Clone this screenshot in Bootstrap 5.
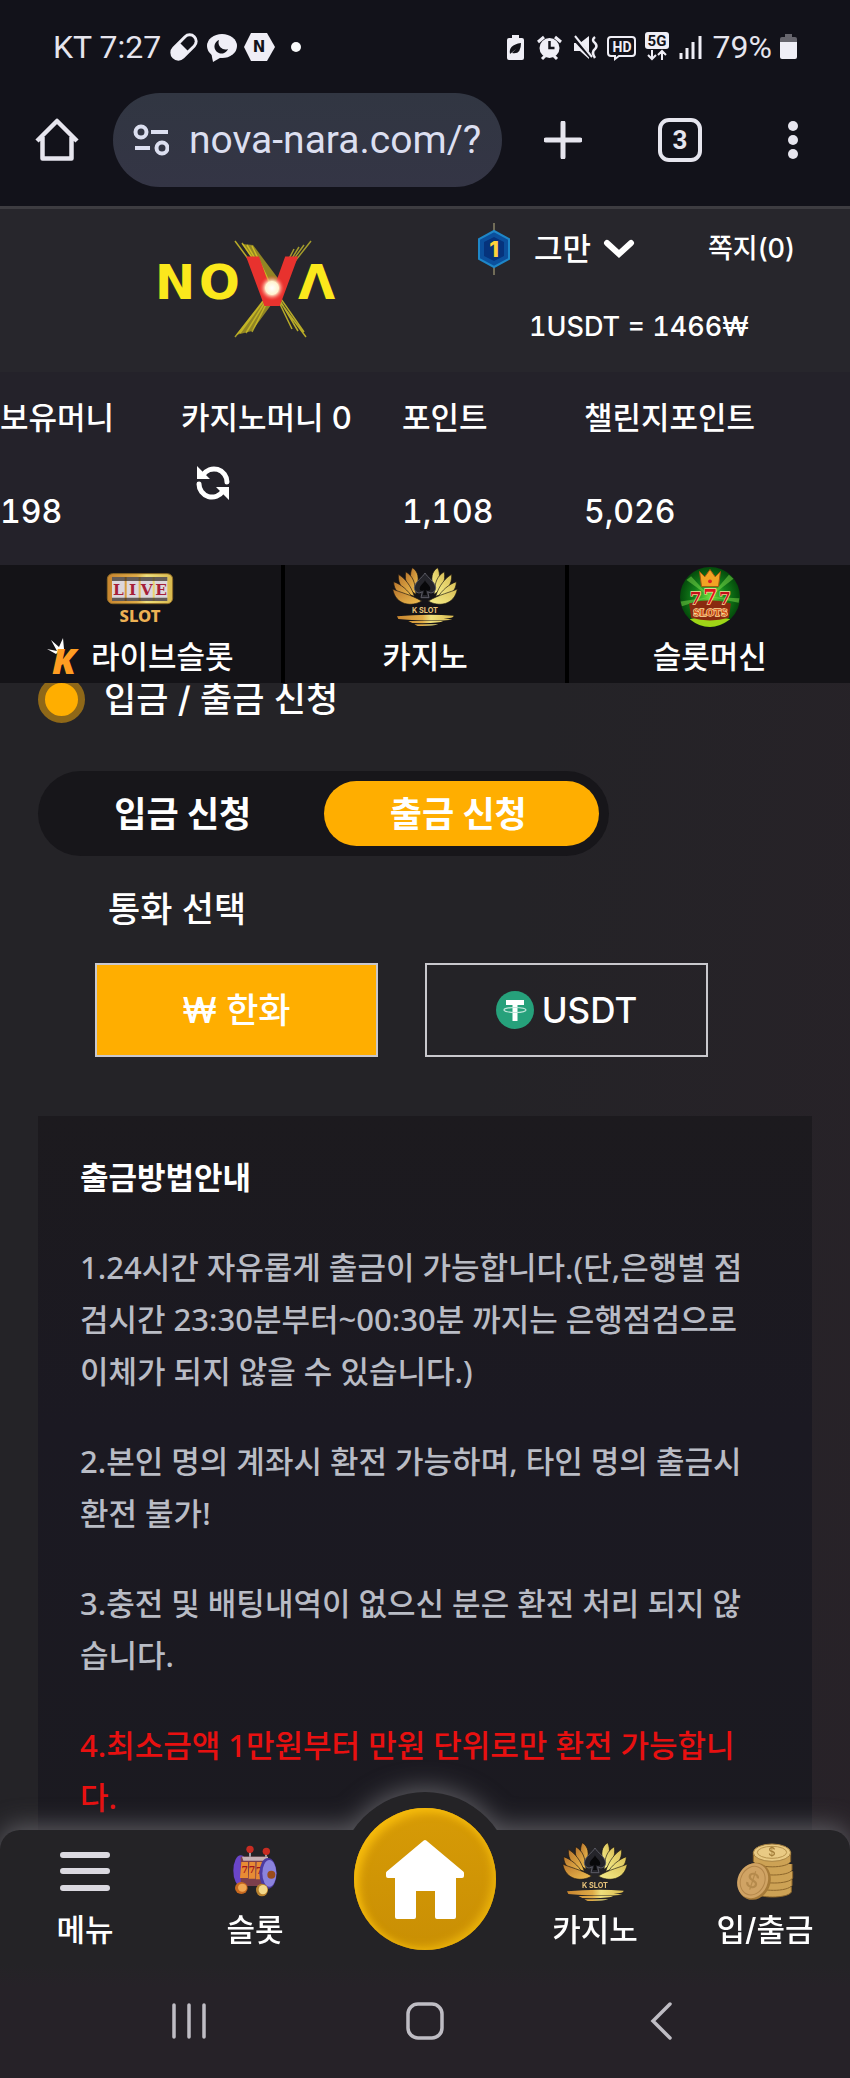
<!DOCTYPE html>
<html lang="ko">
<head>
<meta charset="utf-8">
<meta name="viewport" content="width=device-width, initial-scale=1">
<title>NOVA 입금 / 출금 신청</title>
<link href="https://cdn.jsdelivr.net/npm/bootstrap@5.3.0/dist/css/bootstrap.min.css" rel="stylesheet">
<style>
:root{--amber:#ffae00;--ink:#12121a;--panel:#242327}
body{background:linear-gradient(100deg,#242327 55%,#282228);color:#fff;font-family:Inter,"Noto Sans CJK KR",sans-serif;font-size:31px;line-height:40px;font-weight:500;min-height:100vh}
button,input{font-weight:500}
svg{flex:none;display:block}
.plain{background:none;border:0;padding:0;color:inherit;font-size:inherit;line-height:inherit}
a{color:inherit;text-decoration:none}
.chrome{background:var(--ink);color:#e6e5ee;font-family:Roboto,sans-serif;font-weight:400;border-bottom:3px solid #3d3c41}
.status-row{height:93px;padding:0 53px;font-size:32px}
.dot{width:10px;height:10px}
.browser-row{padding:0 52px 19px 35px}
.address{background:linear-gradient(#313642,#343545);border-radius:47px;height:94px;margin:0 42px 0 34px;padding:0 16px 0 20px;gap:20px}
.address input{font-size:39px;line-height:48px;color:#dcdff0;font-weight:400;min-width:0}
.tabcount{width:44px;height:44px;flex:none;border:4px solid #e6e5ee;border-radius:11px;font:700 26px/36px Roboto,sans-serif;margin:0 86px 0 76px}
.site-head{background:#27262c}
.brand{width:56%;padding:30px 0 0 20px}
.account{padding:15px 55px 25px 2px}
.rank-row{height:50px}
.member{gap:12px}
.notes{font-size:27px}
.rate{font-size:27px;margin:33px 0 0 51px;font-variant-numeric:tabular-nums}
.money{background:#24222a;padding:26px 0 33px;display:grid;grid-template-columns:181fr 221fr 182fr 266fr}
.money dt{font-weight:500}
.money dd{margin:54px 0 0;font-size:32px;font-variant-numeric:tabular-nums}
.money .reload{margin:27px 0 0 14px}
.quick{background:#000;gap:4px;z-index:2}
.quick a{background:#141317;flex:1 1 0;padding:2px 0 6px;gap:10px}
.content{padding:0 38px 48px}
.page-title{font-size:35px;line-height:48px;font-weight:500;margin:-8px 0 48px;gap:19px}
.bullet{width:47px;height:47px;border:7px solid #8f6818;border-radius:50%;background:var(--amber)}
.segment{background:#17161a;border-radius:43px;padding:10px;height:85px;width:571px;max-width:100%}
.segment button{flex:1 1 0;border-radius:33px;font-size:35px;font-weight:700;padding-right:6px}
.segment .active{background:var(--amber)}
.subtitle{font-size:35px;line-height:48px;font-weight:500;margin:29px 0 30px 70px}
.currency{gap:47px;padding:0 104px 0 57px}
.currency button{flex:1 1 0;height:94px;border:2px solid #c9c8cd;font-size:35px}
.currency .active{background:var(--amber)}
.guide{background:linear-gradient(#1c1a1e,#1b1922 40%,#1b1a20);margin-top:59px;padding:35px 50px 30px 42px;line-height:52px;color:#b9bcc5;font-family:"Noto Sans","Noto Sans CJK KR",sans-serif}
.guide h2{font-size:31px;line-height:52px;font-weight:700;color:#fff;margin:0 0 38px}
.guide p{margin:0 0 38px}
.guide .alert-line{color:#e81010}
.dock{filter:drop-shadow(0 -4px 12px #5d5c61)}
.dock-bar{background:#242326;border-radius:20px 20px 0 0;padding-top:12px}
.dock-bar>a{flex:1 1 0;gap:8px;height:122px}
.hump{position:absolute;left:50%;top:-38px;transform:translateX(-50%);width:174px;height:174px;border-radius:50%;background:#242326}
.home-coin{width:142px;height:142px;border-radius:50%;background:linear-gradient(#d79b06,#c98f04);box-shadow:inset 5px 5px 8px #f6bb0c,inset -4px -3px 8px #eab20b;margin-top:-34px}
.sysnav{background:linear-gradient(#242326,#262228 20%);height:114px;padding:0 71px}
.sysnav button{flex:1 1 0}
</style>
</head>
<body>
<svg width="0" height="0" class="position-absolute" aria-hidden="true">
  <defs>
    <linearGradient id="gold" x1="0" x2="1" y1="0" y2="0"><stop offset="0" stop-color="#c8852f"/><stop offset=".45" stop-color="#e0ac48"/><stop offset=".6" stop-color="#efe07c"/><stop offset="1" stop-color="#d9b94e"/></linearGradient>
    <linearGradient id="leafL" x1="0" x2="1" y1="0" y2="1"><stop offset="0" stop-color="#b8752c"/><stop offset="1" stop-color="#f0c050"/></linearGradient>
    <linearGradient id="leafR" x1="0" x2="1" y1="0" y2="1"><stop offset="0" stop-color="#d9bf55"/><stop offset="1" stop-color="#f6ee8c"/></linearGradient>
    <g id="wing"><path d="M62 2C80 14 84 32 74 66C56 46 52 22 62 2Z"/><path d="M42 14C64 28 70 44 73 82C46 66 38 42 42 14Z"/><path d="M20 22C40 34 58 56 68 88C36 80 18 52 20 22Z"/><path d="M6 44C28 52 50 70 62 92C26 90 6 72 6 44Z"/><path d="M3 66C24 76 56 82 90 102C62 120 12 116 3 66Z"/></g>
    <symbol id="lotus" viewBox="0 0 200 180">
      <use href="#wing" fill="url(#leafL)" stroke="#1b1712" stroke-width="2"/>
      <use href="#wing" fill="url(#leafR)" stroke="#1b1712" stroke-width="2" transform="matrix(-1 0 0 1 200 0)"/>
      <path d="M100 18C108 32 130 44 132 62C132 76 118 82 108 74L112 92H88L92 74C82 82 68 76 68 62C70 44 92 32 100 18Z" fill="#24242a" stroke="#5c5c66" stroke-width="3"/>
      <path d="M100 40C104 50 116 56 116 66C114 74 106 72 102 68L106 84H94L98 68C94 72 86 74 84 66C84 56 96 50 100 40Z" fill="#08080a"/>
      <text x="100" y="138" font-size="22" font-weight="700" font-family="Inter,sans-serif" text-anchor="middle" fill="#e6c27a">K SLOT</text>
      <path d="M16 148Q100 140 186 146Q186 154 156 154L182 158Q120 164 20 156ZM50 162H154Q144 170 62 168ZM68 172H140Q124 178 78 177Z" fill="url(#gold)"/>
    </symbol>
  </defs>
</svg>

<header class="chrome">
  <div class="status-row d-flex align-items-center">
    <span class="me-2">KT 7:27</span>
    <svg width="106" height="30" viewBox="-2 0 106 30" fill="#efeef6">
      <g transform="rotate(-45 13 15)"><rect x="-3" y="7" width="32" height="16" rx="8"/><path d="M13 10H21A5 5 0 0 1 21 20H13Z" fill="#12121a"/></g>
      <ellipse cx="51" cy="14" rx="15" ry="12"/><path d="M40 20L42 30L54 23Z"/><path d="M48 8A7 7 0 1 0 57 17A7 7 0 0 1 48 8Z" fill="#12121a"/>
      <path d="M80 1H96L104 15L96 29H80L73 15Z"/><text x="88" y="20" font-size="15" font-weight="900" font-family="DejaVu Sans" text-anchor="middle" fill="#12121a">N</text>
    </svg>
    <span class="dot ms-3 rounded-circle bg-light"></span>
    <svg class="ms-auto me-2" width="198" height="32" viewBox="505 29 198 32" fill="#efeef6">
      <path d="M510 33h7v3h3a2 2 0 0 1 2 2v18a2 2 0 0 1-2 2h-13a2 2 0 0 1-2-2v-18a2 2 0 0 1 2-2h3z"/><path d="M508 52Q506 43 519 41Q519 53 510 51L514 47" fill="#12121a"/>
      <circle cx="547.500" cy="46" r="10"/><path d="M536 40l6-5M559 40l-6-5M540 57l3-3M555 57l-3-3" stroke="#efeef6" stroke-width="3"/><path d="M547.500 39v7h5" stroke="#12121a" stroke-width="2.500" fill="none"/>
      <path d="M572 41h6l9-7v23l-9-8h-6z"/><path d="M571 35l19 21" stroke="#12121a" stroke-width="4"/><path d="M573 34l17 21" stroke="#efeef6" stroke-width="2"/><path d="M593 35q-4 3 0 6q3 3 0 6q-4 3 0 9" stroke="#efeef6" stroke-width="2.500" fill="none"/>
      <path d="M609 35h21a3 3 0 0 1 3 3v13a3 3 0 0 1-3 3h-13l-4 3v-3h-4a3 3 0 0 1-3-3v-13a3 3 0 0 1 3-3z" fill="none" stroke="#efeef6" stroke-width="2"/><text x="620" y="50" font-size="14" font-weight="700" font-family="Roboto" text-anchor="middle">HD</text>
      <rect x="643" y="30" width="24" height="17" rx="3"/><text x="655" y="44" font-size="15" font-weight="700" font-family="Roboto" text-anchor="middle" fill="#12121a">5G</text><path d="M650 48v9m-4-4l4 4l4-4M660 58v-9m-4 4l4-4l4 4" stroke="#efeef6" stroke-width="2" fill="none"/>
      <path d="M679 51v6M685 46v11M691 40v17M698 34v23" stroke="#efeef6" stroke-width="3"/>
    </svg>
    <span class="me-2">79%</span>
    <svg width="17" height="26" viewBox="0 0 17 26"><path d="M5 0h7v3h3a2 2 0 0 1 2 2v4h-17v-4a2 2 0 0 1 2-2h3z" fill="#66656d"/><path d="M0 8h17v15a2 2 0 0 1-2 2h-13a2 2 0 0 1-2-2z" fill="#efeef6"/></svg>
  </div>
  <div class="browser-row d-flex align-items-center">
    <button class="plain" aria-label="홈"><svg width="44" height="44" viewBox="0 0 44 44" fill="none" stroke="#e6e5ee" stroke-width="4.500" stroke-linejoin="round"><path d="M2 23L22 3L42 23M7.500 19V40.500H36.500V19"/></svg></button>
    <label class="address d-flex align-items-center flex-grow-1">
      <svg width="36" height="32" viewBox="0 0 36 32" fill="none" stroke="#dcdff0" stroke-width="4"><circle cx="8" cy="8" r="5.500"/><path d="M18 8H35M2 24H17"/><circle cx="29" cy="24" r="5.500"/></svg>
      <input class="plain w-100" type="text" aria-label="주소" value="nova-nara.com/?">
    </label>
    <button class="plain" aria-label="새 탭"><svg width="38" height="38" viewBox="0 0 38 38"><path d="M19 2V36M2 19H36" stroke="#e6e5ee" stroke-width="5" stroke-linecap="round"/></svg></button>
    <button class="plain tabcount" aria-label="탭 3개">3</button>
    <button class="plain" aria-label="더보기"><svg width="10" height="38" viewBox="0 0 10 38" fill="#e6e5ee"><circle cx="5" cy="5" r="5"/><circle cx="5" cy="19" r="5"/><circle cx="5" cy="33" r="5"/></svg></button>
  </div>
</header>

<section class="site-head d-flex">
  <div class="brand d-flex justify-content-center">
    <a href="#" aria-label="NOVA"><svg width="188" height="100" viewBox="-4 0 188 100" font-family="DejaVu Sans" font-weight="700">
      <defs><radialGradient id="spark"><stop offset="0" stop-color="#fff"/><stop offset=".5" stop-color="#fff3d0"/><stop offset="1" stop-color="#f33" stop-opacity="0"/></radialGradient></defs>
      <g stroke="#b8ab28" stroke-width="1.500"><path d="M77 2L148 98M84 4L146 93M89 6L140 92M94 7L134 90"/><path d="M153 2L77 98M146 6L82 94M141 8L88 94M136 10L94 93" stroke="#a39b2c"/></g>
      <path d="M84 5L95 6L122 42L112 46ZM104 62L78 96L94 92L116 62Z" fill="#d9c51f" opacity=".6"/>
      <g fill="#fbe81c"><text x="-3" y="60" font-size="48">N</text><text x="41" y="60" font-size="48">O</text><text x="140" y="60" font-size="48">Λ</text></g>
      <text x="114" y="67" font-size="68" text-anchor="middle" fill="#e8322e">V</text>
      <circle cx="114" cy="49" r="13" fill="url(#spark)"/>
    </svg></a>
  </div>
  <div class="account flex-grow-1">
    <div class="rank-row d-flex align-items-center">
      <svg width="32" height="52" viewBox="0 0 32 52"><path d="M16 0V52" stroke="#8b8467" stroke-width="1.500"/><path d="M16 8L31 16V36L16 44L1 36V16Z" fill="#0b4f9c" stroke="#1e86c8" stroke-width="2"/><path d="M16 14L26 19V33L16 38L6 33V19Z" fill="#06337c"/><text x="16" y="34" font-size="22" font-weight="800" font-family="Inter" text-anchor="middle" fill="#ffd23a">1</text></svg>
      <button class="plain member d-flex align-items-center ms-4">그만<svg width="32" height="22" viewBox="0 0 32 22"><path d="M4 5L16 16L28 5" fill="none" stroke="#fff" stroke-width="6" stroke-linecap="round"/></svg></button>
      <a href="#" class="notes ms-auto">쪽지(0)</a>
    </div>
    <div class="rate">1USDT = 1466₩</div>
  </div>
</section>

<dl class="money mb-0">
  <div><dt>보유머니</dt><dd>198</dd></div>
  <div><dt>카지노머니 0</dt><dd class="reload"><button class="plain" aria-label="새로고침"><svg width="36" height="36" viewBox="0 0 36 36"><path d="M8 10A13 13 0 0 1 32 17M28 26A13 13 0 0 1 4 19" fill="none" stroke="#fff" stroke-width="5" stroke-linecap="round"/><path d="M2 1V14H15ZM34 35V22H21Z" fill="#fff"/></svg></button></dd></div>
  <div><dt>포인트</dt><dd>1,108</dd></div>
  <div><dt>챌린지포인트</dt><dd>5,026</dd></div>
</dl>

<nav class="quick d-flex position-relative">
  <a href="#" class="d-flex flex-column align-items-center">
    <svg width="68" height="60" viewBox="0 0 204 180">
      <rect x="4" y="20" width="196" height="90" rx="16" fill="url(#gold)"/><rect x="4" y="20" width="196" height="90" rx="16" fill="none" stroke="#8d6a26" stroke-width="3"/>
      <g fill="#dcd7dc"><rect x="18" y="30" width="38" height="72"/><rect x="62" y="30" width="36" height="72"/><rect x="104" y="30" width="36" height="72"/><rect x="146" y="30" width="38" height="72"/></g>
      <path d="M18 30H184V42H18ZM18 92H184V102H18Z" fill="#302820" opacity=".7"/>
      <g fill="#a61f38" font-family="DejaVu Serif" font-weight="700" font-size="46" text-anchor="middle"><text x="37" y="83">L</text><text x="80" y="83">I</text><text x="122" y="83">V</text><text x="165" y="83">E</text></g>
      <text x="102" y="164" font-size="50" font-weight="800" font-family="Noto Sans" text-anchor="middle" fill="#edb154">SLOT</text>
    </svg>
    <span class="d-flex align-items-center gap-1"><svg width="40" height="40" viewBox="0 0 40 40"><path d="M0 12L10 14L4 3L12 10L16 1L17 12Q11 15 9 17Z" fill="#fff"/><text x="5" y="37" font-size="36" font-weight="800" font-style="italic" font-family="Open Sans" fill="#ff9d22">K</text></svg>라이브슬롯</span>
  </a>
  <a href="#" class="d-flex flex-column align-items-center"><svg width="68" height="60"><use href="#lotus"/></svg>카지노</a>
  <a href="#" class="d-flex flex-column align-items-center">
    <svg width="62" height="60" viewBox="0 0 184 184">
      <defs><radialGradient id="felt"><stop offset="0" stop-color="#6ee03c"/><stop offset=".55" stop-color="#12801a"/><stop offset="1" stop-color="#044a0b"/></radialGradient></defs>
      <circle cx="92" cy="92" r="92" fill="url(#felt)"/><path d="M92 92L20 40L34 28ZM92 92L150 24L164 36ZM92 92L2 106L6 120ZM92 92L182 96L180 110Z" fill="#7ddc4a" opacity=".5"/><path d="M30 160Q92 140 154 160Q120 184 92 184Q60 184 30 160Z" fill="#9fd417"/>
      <path d="M60 14L76 30L92 8L108 30L124 14L118 60H66Z" fill="#f2a324" stroke="#a45410" stroke-width="3"/><circle cx="92" cy="44" r="6" fill="#d22"/>
      <path d="M28 112Q92 92 156 112L150 156Q92 172 34 156Z" fill="#8a2a10"/>
      <g font-family="DejaVu Serif" font-weight="700" text-anchor="middle" stroke="#ffdf9a" stroke-width="4" paint-order="stroke"><text x="48" y="112" font-size="52" fill="#c3101a">7</text><text x="138" y="112" font-size="52" fill="#c3101a">7</text><text x="93" y="112" font-size="62" fill="#e0141c">7</text><text x="93" y="150" font-size="28" fill="#d8571b">SLOTS</text></g>
    </svg>슬롯머신</a>
</nav>

<main class="content">
  <h1 class="page-title d-flex align-items-center"><span class="bullet"></span>입금 / 출금 신청</h1>
  <div class="segment d-flex" role="group">
    <button class="plain">입금 신청</button>
    <button class="plain active" aria-pressed="true">출금 신청</button>
  </div>
  <h2 class="subtitle">통화 선택</h2>
  <div class="currency d-flex">
    <button class="plain active" aria-pressed="true">₩ 한화</button>
    <button class="plain d-flex align-items-center justify-content-center gap-2"><svg width="38" height="38" viewBox="0 0 38 38"><circle cx="19" cy="19" r="19" fill="#26a17b"/><path d="M10 9H28V14H21.500V30H16.500V14H10Z" fill="#fff"/><ellipse cx="19" cy="19" rx="11" ry="2.500" fill="none" stroke="#bfe6da" stroke-width="1.200"/></svg>USDT</button>
  </div>
  <section class="guide">
    <h2>출금방법안내</h2>
    <p>1.24시간 자유롭게 출금이 가능합니다.(단,은행별 점검시간 23:30분부터~00:30분 까지는 은행점검으로 이체가 되지 않을 수 있습니다.)</p>
    <p>2.본인 명의 계좌시 환전 가능하며, 타인 명의 출금시 환전 불가!</p>
    <p>3.충전 및 배팅내역이 없으신 분은 환전 처리 되지 않습니다.</p>
    <p class="alert-line">4.최소금액 1만원부터 만원 단위로만 환전 가능합니다.</p>
  </section>
</main>

<footer class="fixed-bottom">
  <div class="dock position-relative">
    <div class="hump"></div>
    <nav class="dock-bar d-flex position-relative">
      <a href="#" class="d-flex flex-column align-items-center"><svg width="50" height="60" viewBox="0 0 50 60"><path d="M3 13H47M3 29H47M3 46H47" stroke="#dbd9e0" stroke-width="6" stroke-linecap="round"/></svg>메뉴</a>
      <a href="#" class="d-flex flex-column align-items-center">
        <svg width="46" height="60" viewBox="0 0 138 180">
          <path d="M54 28V50M102 32V54" stroke="#b9b4bd" stroke-width="5"/><circle cx="54" cy="22" r="11" fill="#c82c22"/><circle cx="103" cy="28" r="11" fill="#c82c22"/>
          <ellipse cx="26" cy="86" rx="22" ry="46" fill="#6a45c8"/><path d="M26 44H106V132H26Z" fill="#7c3f4c"/><path d="M30 44H108V56H34Z" fill="#c6b1b4"/>
          <g fill="#e88b34"><path d="M28 60H48V108H24Z"/><path d="M52 60H70V110H50Z"/><path d="M74 60H92V112H72Z"/></g>
          <g fill="#a4141c" font-family="DejaVu Serif" font-weight="700" font-size="28" text-anchor="middle"><text x="38" y="92">7</text><text x="60" y="94">7</text><text x="82" y="95">7</text></g>
          <ellipse cx="108" cy="94" rx="26" ry="46" fill="#4c3aa0"/><ellipse cx="112" cy="94" rx="21" ry="40" fill="#8b83dd"/><circle cx="118" cy="98" r="12" fill="#9b4c1c"/>
          <ellipse cx="28" cy="138" rx="19" ry="18" fill="#c8691f"/><ellipse cx="31" cy="137" rx="13" ry="12" fill="#f0a752"/><ellipse cx="90" cy="144" rx="18" ry="19" fill="#b9822e"/><ellipse cx="93" cy="143" rx="13" ry="14" fill="#f3d88a"/>
        </svg>슬롯</a>
      <a href="#" class="d-flex justify-content-center align-items-start" aria-label="홈"><span class="home-coin d-flex align-items-center justify-content-center flex-shrink-0"><svg width="82" height="82" viewBox="0 0 82 82"><path d="M41 4L78 35V38H70V79H53V51H30V79H13V38H4V35Z" fill="#fff" stroke="#fff" stroke-width="4" stroke-linejoin="round"/></svg></span></a>
      <a href="#" class="d-flex flex-column align-items-center"><svg width="68" height="60"><use href="#lotus"/></svg>카지노</a>
      <a href="#" class="d-flex flex-column align-items-center">
        <svg width="58" height="60" viewBox="0 0 174 180">
          <g stroke="#8d672c" stroke-width="3" fill="#cda255"><path d="M54 134V150C64 170 156 170 166 150V134"/><path d="M56 112V130C70 150 156 150 168 130V112"/><path d="M58 90V108C70 128 160 128 170 108V88"/><path d="M56 66V84C66 104 158 104 168 84V66"/><path d="M52 32V58C62 80 156 80 164 58V32"/></g>
          <ellipse cx="108" cy="32" rx="56" ry="26" fill="#e9ca84" stroke="#a98443" stroke-width="3"/><ellipse cx="108" cy="31" rx="44" ry="18" fill="none" stroke="#b8934d" stroke-width="3"/><text x="108" y="43" font-size="34" font-family="Inter" text-anchor="middle" fill="#a27c38">$</text>
          <ellipse cx="55" cy="118" rx="48" ry="57" transform="rotate(24 55 118)" fill="#a67a38"/><ellipse cx="50" cy="116" rx="45" ry="54" transform="rotate(24 50 116)" fill="#d0a364"/><ellipse cx="50" cy="116" rx="36" ry="44" transform="rotate(24 50 116)" fill="none" stroke="#b3864a" stroke-width="3"/><text x="50" y="138" font-size="62" font-family="Inter" text-anchor="middle" fill="#b58a4c" transform="rotate(18 50 116)">$</text>
        </svg>입/출금</a>
    </nav>
  </div>
  <div class="sysnav d-flex align-items-center position-relative">
    <button class="plain d-flex justify-content-center" aria-label="최근 앱"><svg width="36" height="36" viewBox="0 0 36 36"><path d="M3 2V34M18 2V34M33 2V34" stroke="#bfbdc4" stroke-width="3.500" stroke-linecap="round"/></svg></button>
    <button class="plain d-flex justify-content-center" aria-label="홈 화면"><svg width="38" height="38" viewBox="0 0 38 38"><rect x="2" y="2" width="34" height="34" rx="10" fill="none" stroke="#bfbdc4" stroke-width="3.500"/></svg></button>
    <button class="plain d-flex justify-content-center" aria-label="뒤로"><svg width="22" height="38" viewBox="0 0 22 38"><path d="M20 2L3 19L20 36" fill="none" stroke="#bfbdc4" stroke-width="3.500" stroke-linecap="round"/></svg></button>
  </div>
</footer>
<script src="https://cdn.jsdelivr.net/npm/bootstrap@5.3.0/dist/js/bootstrap.bundle.min.js"></script>
</body>
</html>
